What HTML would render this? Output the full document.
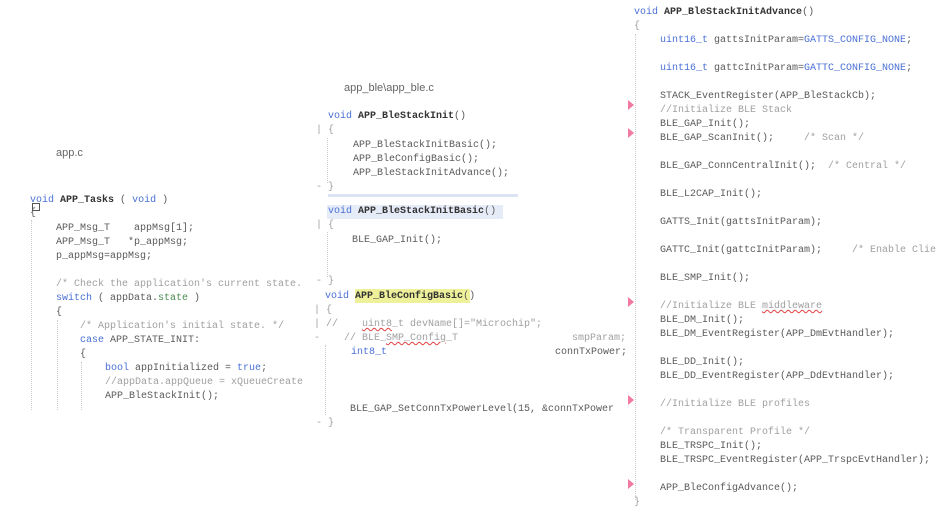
<!DOCTYPE html>
<html><head><meta charset="utf-8"><style>
body{margin:0;width:945px;height:513px;background:#fff;position:relative;overflow:hidden;font-family:"Liberation Mono",monospace;font-size:10px;color:#5a5a5a}
.l{position:absolute;white-space:pre;line-height:12px}
.k{color:#4a70d6}
.c{color:#a0a0a0}
.g{color:#4a8a50}
.b{font-weight:bold;color:#333}
.s{font-family:"Liberation Sans",sans-serif;font-size:11px;color:#666}
.tri{position:absolute;width:0;height:0;border-top:5px solid transparent;border-bottom:5px solid transparent;border-left:6px solid #f07aa0}
.vg{position:absolute;border-left:1px dotted #ccc}
.sq{text-decoration:underline wavy #e04040}
</style></head><body>
<div class="l s" style="left:56px;top:147px">app.c</div>
<div class="l" style="left:30px;top:195px"><span class="k">void</span> <span class="b">APP_Tasks</span> ( <span class="k">void</span> )</div>
<div style="position:absolute;left:32px;top:203px;width:6px;height:6px;border:1px solid #555"></div>
<div class="l" style="left:30px;top:208px">{</div>
<div class="vg" style="left:31px;top:220px;height:190px"></div>
<div class="l" style="left:56px;top:223px">APP_Msg_T    appMsg[1];</div>
<div class="l" style="left:56px;top:237px">APP_Msg_T   *p_appMsg;</div>
<div class="l" style="left:56px;top:251px">p_appMsg=appMsg;</div>
<div class="l c" style="left:56px;top:279px">/* Check the application's current state.</div>
<div class="l" style="left:56px;top:293px"><span class="k">switch</span> ( appData.<span class="g">state</span> )</div>
<div class="l" style="left:56px;top:307px">{</div>
<div class="vg" style="left:57px;top:320px;height:90px"></div>
<div class="l c" style="left:80px;top:321px">/* Application's initial state. */</div>
<div class="l" style="left:80px;top:335px"><span class="k">case</span> APP_STATE_INIT:</div>
<div class="l" style="left:80px;top:349px">{</div>
<div class="vg" style="left:81px;top:362px;height:48px"></div>
<div class="l" style="left:105px;top:363px"><span class="k">bool</span> appInitialized = <span class="k">true</span>;</div>
<div class="l c" style="left:105px;top:377px">//appData.appQueue = xQueueCreate</div>
<div class="l" style="left:105px;top:391px">APP_BleStackInit();</div>

<div class="l s" style="left:344px;top:82px">app_ble\app_ble.c</div>
<div class="l" style="left:328px;top:111px"><span class="k">void</span> <span class="b">APP_BleStackInit</span>()</div>
<div class="l c" style="left:316px;top:125px">| {</div>
<div class="vg" style="left:327px;top:138px;height:45px"></div>
<div class="l" style="left:353px;top:140px">APP_BleStackInitBasic();</div>
<div class="l" style="left:353px;top:154px">APP_BleConfigBasic();</div>
<div class="l" style="left:353px;top:168px">APP_BleStackInitAdvance();</div>
<div class="l c" style="left:316px;top:182px">- }</div>
<div style="position:absolute;left:328px;top:194px;width:190px;height:3px;background:#dbe3f5"></div>
<div style="position:absolute;left:327px;top:205px;width:176px;height:14px;background:#e6ecf7"></div>
<div class="l" style="left:328px;top:206px"><span class="k">void</span> <span class="b">APP_BleStackInitBasic</span>()</div>
<div class="l c" style="left:316px;top:220px">| {</div>
<div class="vg" style="left:327px;top:232px;height:45px"></div>
<div class="l" style="left:352px;top:235px">BLE_GAP_Init();</div>
<div class="l c" style="left:316px;top:276px">- }</div>
<div style="position:absolute;left:355px;top:289px;width:115px;height:14px;background:#eef09a"></div>
<div class="l" style="left:325px;top:291px"><span class="k">void</span> <span class="b">APP_BleConfigBasic</span>()</div>
<div class="l c" style="left:314px;top:305px">| {</div>
<div class="l c" style="left:314px;top:319px">| //    <span class="sq">uint8</span>_t devName[]="Microchip";</div>
<div class="l c" style="left:314px;top:333px">-    // BLE_<span class="sq">SMP_Config</span>_T                   smpParam;</div>
<div class="vg" style="left:325px;top:345px;height:70px"></div>
<div class="l" style="left:351px;top:347px"><span class="k">int8_t</span>                            connTxPower;</div>
<div class="l" style="left:350px;top:404px">BLE_GAP_SetConnTxPowerLevel(15, &amp;connTxPower</div>
<div class="l c" style="left:316px;top:418px">- }</div>

<div class="l" style="left:634px;top:7px"><span class="k">void</span> <span class="b">APP_BleStackInitAdvance</span>()</div>
<div class="l c" style="left:634px;top:21px">{</div>
<div class="vg" style="left:635px;top:34px;height:466px"></div>
<div class="l" style="left:660px;top:35px"><span class="k">uint16_t</span> gattsInitParam=<span class="k">GATTS_CONFIG_NONE</span>;</div>
<div class="l" style="left:660px;top:63px"><span class="k">uint16_t</span> gattcInitParam=<span class="k">GATTC_CONFIG_NONE</span>;</div>
<div class="l" style="left:660px;top:91px">STACK_EventRegister(APP_BleStackCb);</div>
<div class="l c" style="left:660px;top:105px">//Initialize BLE Stack</div>
<div class="l" style="left:660px;top:119px">BLE_GAP_Init();</div>
<div class="l" style="left:660px;top:133px">BLE_GAP_ScanInit();     <span class="c">/* Scan */</span></div>
<div class="l" style="left:660px;top:161px">BLE_GAP_ConnCentralInit();  <span class="c">/* Central */</span></div>
<div class="l" style="left:660px;top:189px">BLE_L2CAP_Init();</div>
<div class="l" style="left:660px;top:217px">GATTS_Init(gattsInitParam);</div>
<div class="l" style="left:660px;top:245px">GATTC_Init(gattcInitParam);     <span class="c">/* Enable Clie</span></div>
<div class="l" style="left:660px;top:273px">BLE_SMP_Init();</div>
<div class="l c" style="left:660px;top:301px">//Initialize BLE <span class="sq">middleware</span></div>
<div class="l" style="left:660px;top:315px">BLE_DM_Init();</div>
<div class="l" style="left:660px;top:329px">BLE_DM_EventRegister(APP_DmEvtHandler);</div>
<div class="l" style="left:660px;top:357px">BLE_DD_Init();</div>
<div class="l" style="left:660px;top:371px">BLE_DD_EventRegister(APP_DdEvtHandler);</div>
<div class="l c" style="left:660px;top:399px">//Initialize BLE profiles</div>
<div class="l c" style="left:660px;top:427px">/* Transparent Profile */</div>
<div class="l" style="left:660px;top:441px">BLE_TRSPC_Init();</div>
<div class="l" style="left:660px;top:455px">BLE_TRSPC_EventRegister(APP_TrspcEvtHandler);</div>
<div class="l" style="left:660px;top:483px">APP_BleConfigAdvance();</div>
<div class="l c" style="left:634px;top:497px">}</div>

<div class="tri" style="left:628px;top:100px"></div>
<div class="tri" style="left:628px;top:128px"></div>
<div class="tri" style="left:628px;top:297px"></div>
<div class="tri" style="left:628px;top:395px"></div>
<div class="tri" style="left:628px;top:479px"></div>
</body></html>
